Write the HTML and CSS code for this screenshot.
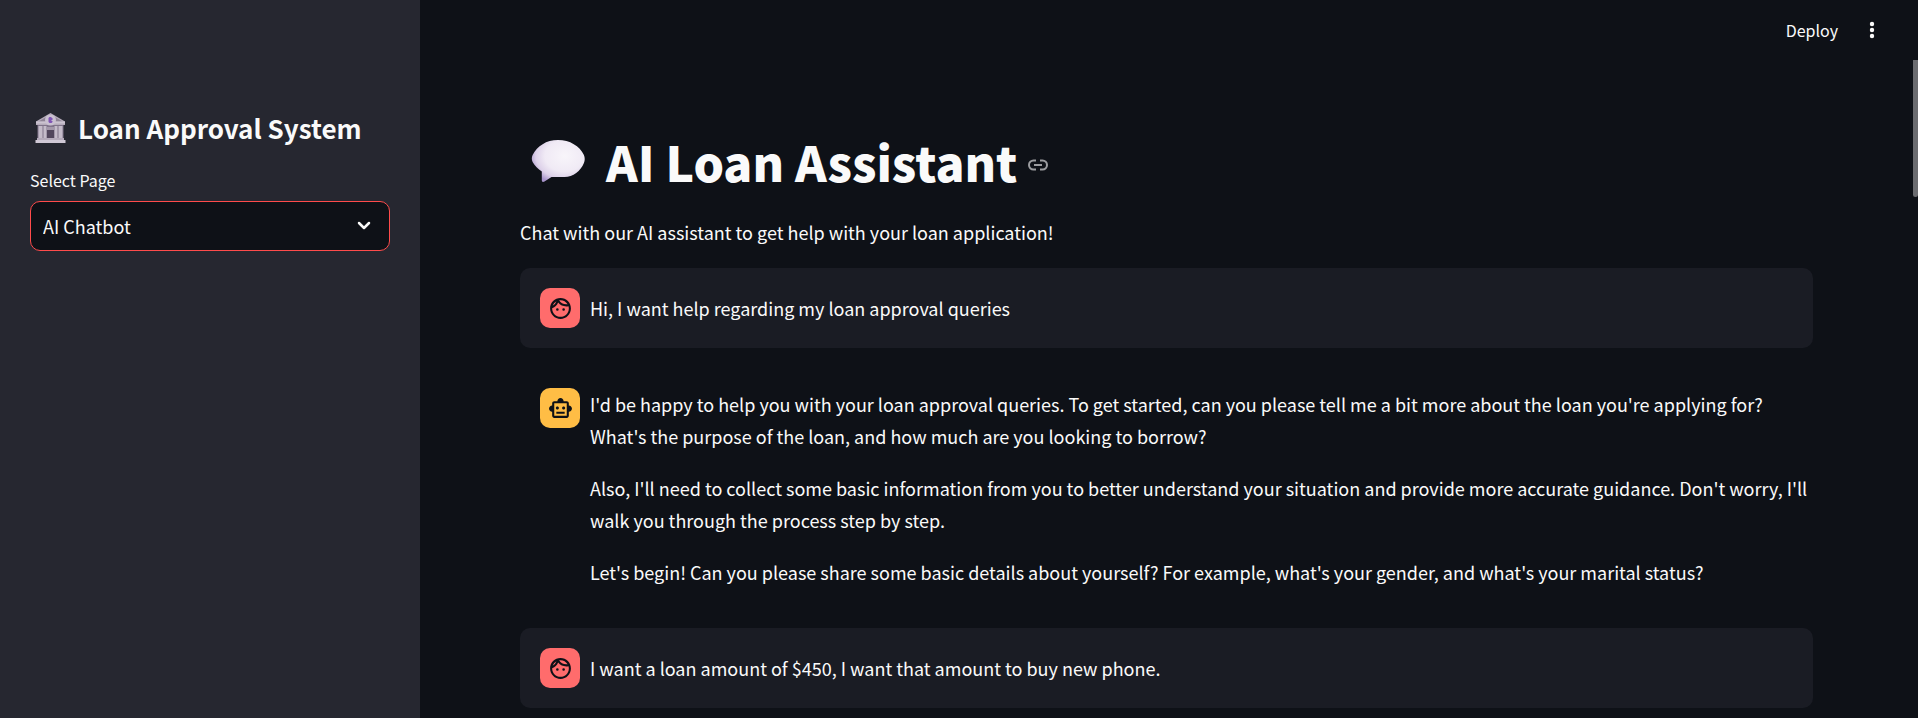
FILE: index.html
```html
<!DOCTYPE html>
<html lang="en">
<head>
<meta charset="utf-8">
<meta name="viewport" content="width=device-width, initial-scale=1">
<title>AI Loan Assistant</title>
<link rel="stylesheet" href="styles.css">
</head>
<body>
<svg class="defs" aria-hidden="true">
  <symbol id="face" viewBox="0 0 24 24">
    <path d="M10.25 13a1.25 1.25 0 1 1-2.5 0 1.25 1.25 0 0 1 2.5 0zM15 11.75a1.25 1.25 0 1 0 0 2.5 1.25 1.25 0 0 0 0-2.5zm7 .25c0 5.52-4.48 10-10 10S2 17.52 2 12 6.480 2 12 2s10 4.480 10 10zM10.660 4.120C12.060 6.440 14.600 8 17.500 8c.460 0 .910-.050 1.340-.120C17.440 5.560 14.900 4 12 4c-.460 0-.910.050-1.340.120zM4.420 9.470a8.046 8.046 0 0 0 3.660-4.440A8.046 8.046 0 0 0 4.420 9.470zM20 12c0-.780-.120-1.530-.330-2.240-.700.150-1.420.240-2.170.240a10 10 0 0 1-7.760-3.690A10.016 10.016 0 0 1 4 11.860c.010.040 0 .090 0 .140 0 4.410 3.590 8 8 8s8-3.590 8-8z"/>
  </symbol>
  <symbol id="robot" viewBox="0 0 24 24">
    <path d="M20 9V7c0-1.100-.900-2-2-2h-3c0-1.660-1.340-3-3-3S9 3.340 9 5H6c-1.100 0-2 .900-2 2v2c-1.660 0-3 1.340-3 3s1.340 3 3 3v4c0 1.100.900 2 2 2h12c1.100 0 2-.900 2-2v-4c1.660 0 3-1.340 3-3s-1.340-3-3-3zm-2 10H6V7h12v12zm-9-6c-.830 0-1.500-.670-1.500-1.500S8.170 10 9 10s1.500.670 1.500 1.500S9.830 13 9 13zm7.500-1.500c0 .830-.670 1.500-1.500 1.500s-1.500-.670-1.500-1.500.670-1.500 1.500-1.500 1.500.670 1.500 1.500zM8 15h8v2H8v-2z"/>
  </symbol>
</svg>
<div class="app">
  <aside class="sidebar">
    <h2 class="sidebar-title">
      <svg class="bank" viewBox="0 0 30 30" aria-hidden="true">
        <path d="M15 0 29.500 8.500V12H.500V8.500z" fill="#b5abba"/>
        <path d="M15 1.500 27 8.500H3z" fill="#8f8496"/>
        <path d="M.500 8.500h29v2H.500z" fill="#cbc3d0"/>
        <path d="M2 12h26v14H2z" fill="#80748a"/>
        <path d="M3 13h4v13H3zM8 13h3v13H8zM19 13h3v13h-3zM23 13h4v13h-4z" fill="#c4bbc9"/>
        <path d="M11 14h8v3h-8z" fill="#a398aa"/>
        <path d="M11.500 17h7v9h-7z" fill="#51465c"/>
        <path d="M1.500 25h27v2h-27z" fill="#b4aaba"/>
        <path d="M0 27h30v3H0z" fill="#d0c8d5"/>
        <circle cx="15" cy="7" r="5.500" fill="#c9c0d0"/>
        <path d="M14 4h2v1h1v2h-1v1h1v1l-1 1h-2l-1-1V5z" fill="#8055b5"/>
      </svg>
      <span>Loan Approval System</span>
    </h2>
    <label class="field-label" for="page">Select Page</label>
    <div class="select">
      <select id="page"><option>AI Chatbot</option></select>
      <svg class="chevron" viewBox="0 0 14 10" aria-hidden="true"><path d="m2 2 5 5 5-5"/></svg>
    </div>
  </aside>
  <main class="main">
    <header class="toolbar">
      <button class="deploy" type="button">Deploy</button>
      <button class="menu" type="button" aria-label="Main menu">
        <svg viewBox="0 0 6 18" aria-hidden="true"><circle cx="3" cy="3" r="2.200"/><circle cx="3" cy="9" r="2.200"/><circle cx="3" cy="15" r="2.200"/></svg>
      </button>
    </header>
    <div class="content">
      <h1 class="title">
        <svg class="bubble" viewBox="0 0 50 42" preserveAspectRatio="none" aria-hidden="true">
          <defs>
            <radialGradient id="shine" cx=".62" cy=".38" r=".68">
              <stop offset="0" stop-color="#f8f5fa"/>
              <stop offset=".55" stop-color="#f0eaf5"/>
              <stop offset=".8" stop-color="#ddd1e9"/>
              <stop offset="1" stop-color="#a894ca"/>
            </radialGradient>
          </defs>
          <path d="M25 0C14 0 6 6 1.500 15c-1 2-1 5 0 7 2 4 5 7 8.500 9.500V40c0 2 1 2.500 2.500 1.500L19 37h12c8 0 15-6 18-14 1-3 1-5 0-8C45 6 36 0 25 0z" fill="url(#shine)"/>
        </svg>
        <span>AI Loan Assistant</span>
        <a class="anchor" href="#top" aria-label="Link to heading">
          <svg viewBox="0 0 20 12" aria-hidden="true"><path d="M8 1.500H5.500a4.500 4.500 0 0 0 0 9H8M12 1.500h2.500a4.500 4.500 0 0 1 0 9H12M6 6h8"/></svg>
        </a>
      </h1>
      <p>Chat with our AI assistant to get help with your loan application!</p>
      <article class="message user">
        <div class="avatar"><svg aria-hidden="true"><use href="#face"/></svg></div>
        <div class="text"><p>Hi, I want help regarding my loan approval queries</p></div>
      </article>
      <article class="message assistant">
        <div class="avatar"><svg aria-hidden="true"><use href="#robot"/></svg></div>
        <div class="text">
          <p>I'd be happy to help you with your loan approval queries. To get started, can you please tell me a bit more about the loan you're applying for? What's the purpose of the loan, and how much are you looking to borrow?</p>
          <p>Also, I'll need to collect some basic information from you to better understand your situation and provide more accurate guidance. Don't worry, I'll walk you through the process step by step.</p>
          <p>Let's begin! Can you please share some basic details about yourself? For example, what's your gender, and what's your marital status?</p>
        </div>
      </article>
      <article class="message user">
        <div class="avatar"><svg aria-hidden="true"><use href="#face"/></svg></div>
        <div class="text"><p>I want a loan amount of $450, I want that amount to buy new phone.</p></div>
      </article>
    </div>
    <div class="scroll-thumb"></div>
  </main>
</div>
</body>
</html>
```
FILE: styles.css
```css
* {
  box-sizing: border-box;
}

body {
  margin: 0;
  background: #0e1117;
  color: #fafafa;
  font: 18px/32px "Noto Sans CJK SC", "Noto Sans", sans-serif;
}

h1,
h2,
p {
  margin: 0;
}

button,
select {
  font: inherit;
  color: inherit;
}

.defs {
  display: none;
}

.app {
  display: flex;
  height: 100vh;
  overflow: hidden;
}

.sidebar {
  flex: 0 0 420px;
  padding: 108px 30px 0;
  background: #262730;
}

.sidebar-title {
  display: flex;
  align-items: center;
  gap: 12px;
  padding-left: 5px;
  font-size: 26px;
  line-height: 40px;
  font-weight: 600;
  white-space: nowrap;
}

.bank {
  width: 31px;
  height: 30px;
}

.field-label {
  display: block;
  margin: 20px 0 8px;
  font-size: 16px;
  line-height: 25px;
}

.select {
  position: relative;
}

.select select {
  display: block;
  width: 100%;
  height: 50px;
  padding: 0 12px;
  appearance: none;
  background: #0e1117;
  border: 1px solid #ff4b4b;
  border-radius: 10px;
  outline: none;
}

.chevron {
  position: absolute;
  top: 20px;
  right: 19px;
  width: 14px;
  height: 10px;
  fill: none;
  stroke: #fafafa;
  stroke-width: 2.5;
  stroke-linecap: round;
  stroke-linejoin: round;
  pointer-events: none;
}

.main {
  position: relative;
  flex: 1;
  min-width: 0;
}

.toolbar {
  display: flex;
  justify-content: flex-end;
  align-items: center;
  gap: 22px;
  height: 60px;
  padding-right: 34px;
}

.toolbar button {
  padding: 0;
  border: 0;
  background: none;
}

.deploy {
  font-size: 16px;
}

.menu {
  display: flex;
  justify-content: center;
  width: 24px;
}

.menu svg {
  width: 6px;
  height: 18px;
  fill: #fafafa;
}

.content {
  display: flex;
  flex-direction: column;
  gap: 20px;
  padding: 68px 105px 100px 100px;
}

.title {
  display: flex;
  align-items: center;
  gap: 21px;
  padding: 0 0 2px 11px;
  font-size: 48px;
  line-height: 66px;
  font-weight: 900;
  white-space: nowrap;
}

.bubble {
  width: 54px;
  height: 42px;
}

.anchor {
  display: flex;
  margin-left: -10px;
  padding-top: 8px;
}

.anchor svg {
  width: 20px;
  height: 12px;
  fill: none;
  stroke: #9c9da0;
  stroke-width: 2;
}

.message {
  display: flex;
  gap: 10px;
  padding: 20px 5px 20px 20px;
  border-radius: 10px;
}

.message.user {
  align-items: center;
  background: #1a1c24;
}

.avatar {
  display: grid;
  place-items: center;
  flex: 0 0 40px;
  height: 40px;
  border-radius: 10px;
  background: #ff6c6c;
}

.assistant .avatar {
  background: #ffbd45;
}

.avatar svg {
  width: 25px;
  height: 25px;
  fill: #0e1117;
}

.text {
  display: grid;
  gap: 20px;
  min-width: 0;
}

.scroll-thumb {
  position: absolute;
  top: 60px;
  right: 0;
  width: 5px;
  height: 137px;
  background: #6b6c70;
  border-radius: 0 0 4px 4px;
}
```
